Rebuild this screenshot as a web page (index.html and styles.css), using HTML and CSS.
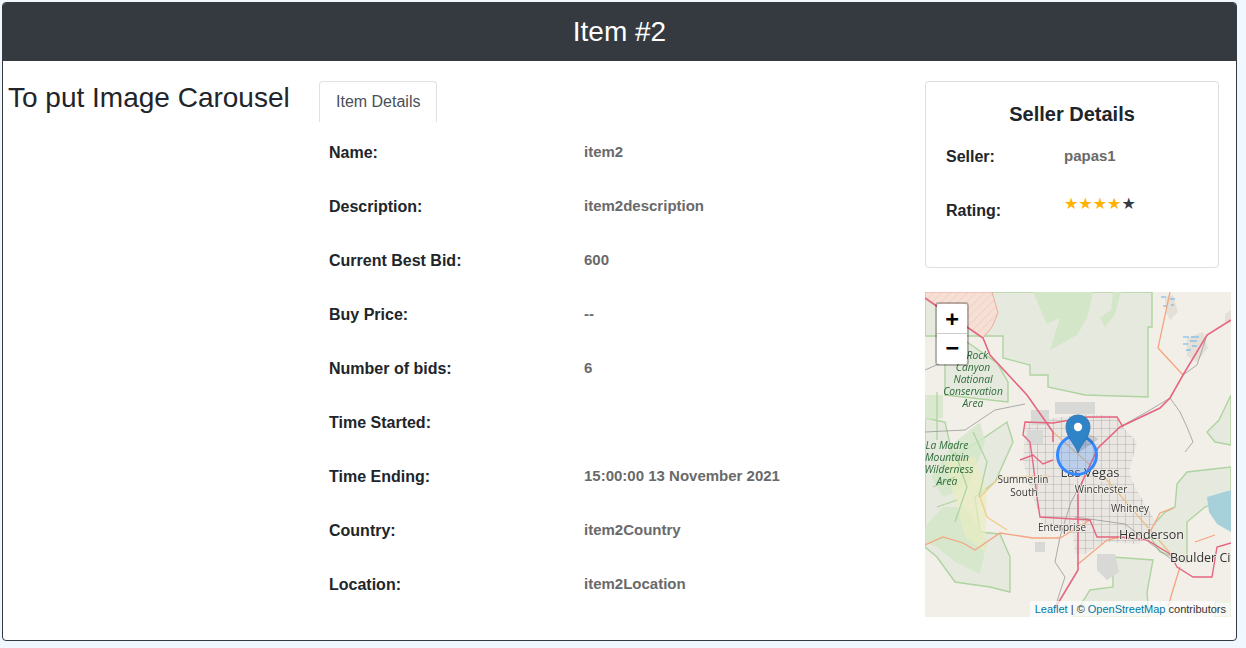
FILE: index.html
```html
<!DOCTYPE html>
<html lang="en">
<head>
  <meta charset="UTF-8" />
  <title>Item #2</title>
  <link rel="stylesheet" href="styles.css">
</head>
<body>
  <div class="item-card">
    <div class="item-header">Item #2</div>

    <div class="item-body">
      <div class="carousel">To put Image Carousel</div>

      <div class="details">
        <div class="tabs"><span class="tab">Item Details</span></div>
        <div class="detail-list">
          <div class="detail-row"><b>Name:</b><span>item2</span></div>
          <div class="detail-row"><b>Description:</b><span>item2description</span></div>
          <div class="detail-row"><b>Current Best Bid:</b><span>600</span></div>
          <div class="detail-row"><b>Buy Price:</b><span>--</span></div>
          <div class="detail-row"><b>Number of bids:</b><span>6</span></div>
          <div class="detail-row"><b>Time Started:</b><span></span></div>
          <div class="detail-row"><b>Time Ending:</b><span>15:00:00 13 November 2021</span></div>
          <div class="detail-row"><b>Country:</b><span>item2Country</span></div>
          <div class="detail-row"><b>Location:</b><span>item2Location</span></div>
        </div>
      </div>

      <div class="side">
        <div class="seller">
          <h5>Seller Details</h5>
          <div class="seller-row"><b>Seller:</b><span>papas1</span></div>
          <div class="seller-row"><b>Rating:</b><span class="stars">★★★★<i>★</i></span></div>
        </div>

        <div class="map">
          <svg class="tiles" viewBox="0 0 306 325" width="306" height="325">
            <defs>
              <pattern id="hatch" width="6" height="6" patternUnits="userSpaceOnUse" patternTransform="rotate(45)">
                <rect width="6" height="6" fill="#f6e0d6" />
                <line x1="0" y1="0" x2="0" y2="6" stroke="#eec3b6" stroke-width="1" />
              </pattern>
              <pattern id="streets" width="8" height="8" patternUnits="userSpaceOnUse">
                <rect width="8" height="8" fill="#e8e6e2" />
                <path d="M0 0H8M0 0V8" stroke="#a8a8a8" stroke-width="1.1" fill="none" />
              </pattern>
            </defs>
            <rect width="306" height="325" fill="#f2efe9" />

            <!-- parks -->
            <path class="park" d="M58 44H78V66L105 73V83H123V95L160 103L223 105V35H227V0H0V44Z" />
            <path class="forest" d="M108 0H168L162 26L152 43L125 58L135 26L122 32Z" />
            <path class="forest" d="M188 0H196L190 22L180 35L175 26L186 18Z" />
            <path class="park" d="M20 56V103L83 110V90L72 71L42 50Z" />
            <path class="park" d="M0 126L20 130L28 165L60 145L82 130L88 150L70 190L50 205L55 240L75 242L85 265L85 300L65 295L30 290L12 265L0 255Z" />
            <path class="forest soft" d="M0 103H18V126L0 128Z" />
            <path class="forest soft" d="M6 185L30 150L55 130L60 150L45 190L30 200L18 205Z" />
            <path class="forest soft" d="M0 235L18 215L40 215L62 250L55 282L30 270L12 255L0 250Z" />
            <path class="yellow" d="M20 170L50 165L62 200L60 260L40 245Z" />
            <path class="line" d="M12 100V148M48 140L62 170L54 205M30 160L42 195L30 230M8 195L30 185M12 215L32 208" />
            <path class="park" d="M148 325L165 298L188 295L188 265L228 268L222 300L224 325Z" />
            <path class="park" d="M252 192L262 180L306 175V205L280 215L262 230L262 270L235 260L222 240L240 220L250 215Z" />
            <path class="park" d="M294 128L306 103V153L290 150L282 140Z" />
            <path class="park" d="M290 310H306V325H290Z" />

            <!-- water -->
            <path class="water" d="M282 205L306 198V240L292 232L284 220Z" />
            <path class="salt" d="M240 5L248 3L253 20L245 28L241 20Z" />
            <path class="salt" d="M262 46L278 40L283 56L272 70L262 64Z" />
            <path class="salt" d="M300 22L306 18V32L300 30Z" />
            <path class="dash" d="M236 5H241M245 7H250M238 14H242M246 13H249M266 45H274M258 45H264M265 49H272M258 52H263M267 54H272M261 58H266" />

            <path d="M0 0H67L73 21L67 35L58 46L42 35L12 15L0 6Z" fill="url(#hatch)" stroke="#e8a08f" stroke-width=".8" />

            <!-- city -->
            <path d="M100 132L128 126L162 122L192 124L198 135L212 150L204 180L210 195L232 232L214 252L180 250L160 262L150 262L148 242L118 232L108 205L98 170Z" fill="url(#streets)" opacity=".85" />
            <path class="sprawl" d="M106 118H124V133H106ZM130 110H170V122H130ZM102 138H118V152H102ZM172 262H190L194 280L182 288L172 278ZM110 250H120V260H110Z" />

            <!-- trails -->
            <path class="trail" d="M0 78L32 64M0 140L40 138L70 118L100 112M282 43L272 73L258 83M245 106L255 120L262 135L268 150L260 160M195 135L225 118L245 106M158 188L146 210L135 245L130 270L140 285L135 300L130 316M150 225L200 232L250 270" />

            <!-- roads -->
            <path class="tan" d="M128 140L182 188L245 261" />
            <path class="yellow-road" d="M125 184L75 185L55 205L62 225L82 238" />
            <path class="orange" d="M245 0L233 56L258 83M192 125L198 135M0 253L18 245L38 251L50 258L75 241L108 246L135 246L165 228M152 273L182 248L195 245M255 275L247 301L243 315M225 240L235 221L248 216M270 250L290 243" />
            <path class="motorway" d="M0 6L42 35L58 46L65 63L102 103L128 140V150M306 28L282 43L258 83L245 106L235 116L195 135L173 156L158 188L153 201V278L135 308L130 316" />
            <path class="motorway thin" d="M128 131L100 130L98 143L105 150L108 171L112 205L115 225L165 228L172 245L195 245L222 248L245 262L252 275L268 285L287 285L292 255L306 251M128 131L162 125L192 125L198 135M95 168L108 163L118 172L128 168" />

            <!-- labels -->
            <g class="park-label">
              <text x="48" y="67">d Rock</text>
              <text x="48" y="79">Canyon</text>
              <text x="48" y="91">National</text>
              <text x="48" y="103">Conservation</text>
              <text x="48" y="115">Area</text>
              <text x="22" y="157">La Madre</text>
              <text x="22" y="169">Mountain</text>
              <text x="24" y="181">Wilderness</text>
              <text x="22" y="193">Area</text>
            </g>
            <g class="city-label">
              <text x="98" y="191">Summerlin</text>
              <text x="99" y="204">South</text>
              <text x="176" y="201">Winchester</text>
              <text x="205" y="220">Whitney</text>
              <text x="137" y="239">Enterprise</text>
            </g>
            <g class="town-label">
              <text x="165" y="185" class="big">Las Vegas</text>
              <text x="194" y="247">Henderson</text>
              <text x="245" y="270">Boulder City</text>
            </g>

            <!-- radius and marker -->
            <circle cx="152" cy="163" r="19.5" fill="#3388ff" fill-opacity=".25" stroke="#3388ff" stroke-width="3" />
            <path d="M153 161L174 147L160 140Z" fill="#000" opacity=".12" />
            <path d="M153 161C150 152 141 145 141 135C141 128 146 123 153 123C160 123 165 128 165 135C165 145 156 152 153 161Z" fill="#2f84c8" stroke="#2a6fa8" stroke-width=".8" />
            <circle cx="153" cy="135" r="4.2" fill="#fff" />
          </svg>

          <div class="zoom-control">
            <span class="zoom-btn">+</span>
            <span class="zoom-btn">−</span>
          </div>
          <div class="attribution"><a>Leaflet</a> | © <a>OpenStreetMap</a> contributors</div>
        </div>
      </div>
    </div>
  </div>
</body>
</html>
```

FILE: styles.css
```css
body {
  margin: 2px;
  background: #f0f7ff;
  font-family: "Liberation Sans", Arial, sans-serif;
  color: #212529;
}

.item-card {
  width: 1235px;
  height: 639px;
  box-sizing: border-box;
  background: #fff;
  border: 1px solid #343a40;
  border-radius: 4px;
  overflow: hidden;
}

.item-header {
  height: 58px;
  margin-top: -1px;
  padding-top: 1px;
  background: #343a40;
  color: #fff;
  font-size: 28px;
  line-height: 58px;
  text-align: center;
}

.item-body {
  display: grid;
  grid-template-columns: 316px 606px 306px;
  padding-top: 20px;
}

.carousel {
  padding-left: 5px;
  font-size: 28px;
  line-height: 33px;
}

.tabs {
  display: flex;
  height: 41px;
}

.tab {
  padding: 8px 16px 0;
  border: 1px solid #dee2e6;
  border-bottom: none;
  border-radius: 4px 4px 0 0;
  color: #495057;
  font-size: 16px;
  line-height: 24px;
}

.detail-list {
  padding-left: 10px;
  margin-top: 4px;
}

.detail-row {
  display: grid;
  grid-template-columns: 255px 1fr;
  align-items: center;
  height: 54px;
  font-size: 16px;
}

.detail-row span,
.seller-row span {
  margin-top: -4px;
  color: #6a6a6a;
  font-size: 15px;
  font-weight: bold;
}

.seller {
  box-sizing: border-box;
  width: 294px;
  height: 187px;
  padding: 20px 20px 0;
  border: 1px solid rgba(0, 0, 0, 0.125);
  border-radius: 4px;
}

.seller h5 {
  margin: 0 0 4px;
  font-size: 20px;
  line-height: 24px;
  text-align: center;
}

.seller-row {
  display: grid;
  grid-template-columns: 118px 1fr;
  align-items: center;
  height: 54px;
  font-size: 16px;
}

.seller-row .stars {
  align-self: start;
  margin-top: 11px;
  color: #ffb300;
  font-family: "DejaVu Sans", sans-serif;
  font-size: 16px;
  font-weight: normal;
  line-height: 18px;
}

.stars i {
  color: #343a40;
  font-style: normal;
}

.map {
  position: relative;
  width: 306px;
  height: 325px;
  margin-top: 24px;
  overflow: hidden;
}

.tiles {
  display: block;
  filter: blur(0.3px);
}

.park { fill: #e6e9dd; stroke: #aed4a0; stroke-width: 1.4; }
.forest { fill: #d3e6c8; }
.soft { opacity: 0.8; }
.yellow { fill: #e8edc0; opacity: 0.7; }
.line { stroke: #aed4a0; stroke-width: 1.3; fill: none; }
.water { fill: #a6d1da; }
.salt { fill: #e4e0d8; }
.sprawl { fill: #d8d8d6; }
.dash { stroke: #45a5f0; stroke-width: 0.8; fill: none; }
.trail { stroke: #8d8d8d; stroke-width: 0.7; fill: none; }
.tan { stroke: #e9c08c; stroke-width: 1.4; fill: none; }
.yellow-road { stroke: #f0cc88; stroke-width: 1.2; fill: none; }
.orange { stroke: #f4a580; stroke-width: 1.3; fill: none; }
.motorway { stroke: #e5667f; stroke-width: 1.6; fill: none; }
.thin { stroke-width: 1.4; }

.park-label text {
  fill: #2c6b3a;
  font-family: "Open Sans", sans-serif;
  font-size: 10.3px;
  font-style: italic;
  text-anchor: middle;
}

.city-label text {
  fill: #3a3a3a;
  font-family: "Open Sans", sans-serif;
  font-size: 10px;
  text-anchor: middle;
  stroke: #f2efe9;
  stroke-width: 1.5px;
  paint-order: stroke;
}

.town-label text {
  fill: #333;
  font-family: "Open Sans", sans-serif;
  font-size: 12.5px;
  stroke: #f2efe9;
  stroke-width: 1.5px;
  paint-order: stroke;
}

.town-label .big {
  text-anchor: middle;
  font-size: 13px;
}

.zoom-control {
  position: absolute;
  top: 10px;
  left: 10px;
  display: flex;
  flex-direction: column;
  border: 2px solid rgba(0, 0, 0, 0.25);
  border-radius: 4px;
  background-clip: padding-box;
}

.zoom-btn {
  width: 30px;
  height: 30px;
  background: #fff;
  color: #000;
  font-family: "DejaVu Sans Mono", monospace;
  font-size: 22px;
  font-weight: bold;
  line-height: 28px;
  text-align: center;
}

.zoom-btn:first-child {
  height: 29px;
  border-bottom: 1px solid #ccc;
  border-radius: 2px 2px 0 0;
  line-height: 30px;
}

.zoom-btn:last-child {
  border-radius: 0 0 2px 2px;
}

.attribution {
  position: absolute;
  right: 0;
  bottom: 0;
  padding: 0 5px;
  background: rgba(255, 255, 255, 0.7);
  color: #333;
  font-size: 11px;
  line-height: 16px;
}

.attribution a {
  color: #0078a8;
}
```
